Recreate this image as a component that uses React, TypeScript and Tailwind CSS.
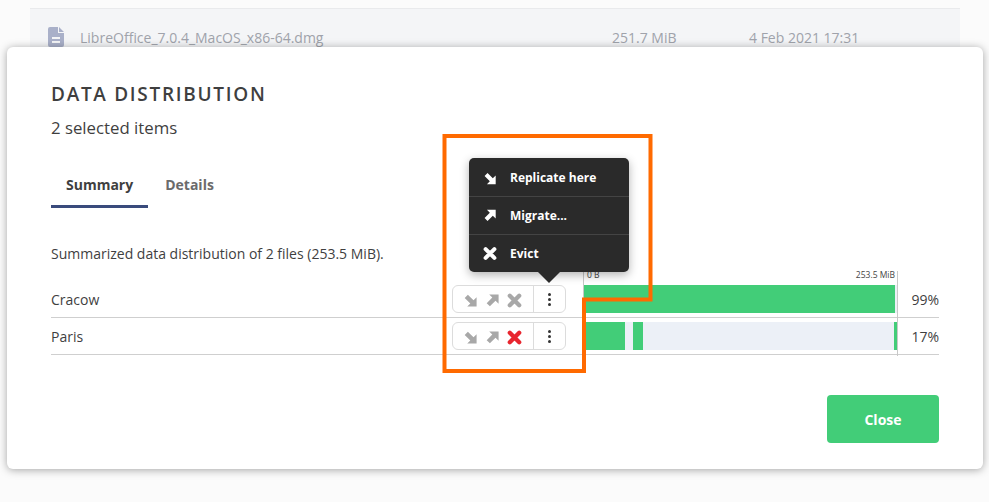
const ArrowIcon = ({ down, className }: { down?: boolean; className: string }) => (
  <svg viewBox="0 0 16 16" className={`h-[15px] w-[15px] ${down ? "rotate-90" : ""} ${className}`} fill="currentColor">
    <path d="M4.5 1.5 H14.5 V11.5 L11.2 8.2 L5.2 14.2 L1.8 10.8 L7.8 4.8 Z" />
  </svg>
);

const CrossIcon = ({ className }: { className: string }) => (
  <svg viewBox="0 0 16 16" className={`h-[15px] w-[15px] ${className}`} fill="none" stroke="currentColor" strokeWidth="4.6" strokeLinecap="round">
    <path d="M3 3 L13 13 M13 3 L3 13" />
  </svg>
);

const Dots = () => (
  <span className="flex flex-col gap-[2px]">
    <span className="h-[3px] w-[3px] rounded-full bg-[#333]" />
    <span className="h-[3px] w-[3px] rounded-full bg-[#333]" />
    <span className="h-[3px] w-[3px] rounded-full bg-[#333]" />
  </span>
);

const menuItems = [
  { label: "Replicate here", icon: <ArrowIcon down className="text-white" /> },
  { label: "Migrate...", icon: <ArrowIcon className="text-white" /> },
  { label: "Evict", icon: <CrossIcon className="text-white" /> },
];

function Actions({ evict, menu }: { evict?: boolean; menu?: boolean }) {
  return (
    <div className="relative flex h-[28px] w-[114px] shrink-0 rounded-[6px] border border-[#dcdcdc] bg-white">
      <div className="flex w-[81px] items-center justify-between border-r border-[#dcdcdc] pl-[10px] pr-[11px] pt-[2px]">
        <ArrowIcon down className="text-[#a8a8a8]" />
        <ArrowIcon className="text-[#a8a8a8]" />
        <CrossIcon className={evict ? "text-[#e8262f]" : "text-[#a8a8a8]"} />
      </div>
      <div className="flex flex-1 items-center justify-center pt-[1px]">
        <Dots />
      </div>
      {menu && (
        <div className="absolute bottom-[40px] left-[16px] z-10 w-[160px] rounded-[5px] bg-[#2a2a2a] shadow-[0_3px_10px_rgba(0,0,0,0.3)]">
          {menuItems.map((item, i) => (
            <div key={item.label} className={`flex h-[38px] items-center gap-[13px] pl-[14px] text-[12px] font-bold text-white ${i > 0 ? "border-t border-[#444]" : "pt-[2px]"}`}>
              <span className="flex w-[14px] justify-center">{item.icon}</span>
              {item.label}
            </div>
          ))}
          <div className="absolute left-[69px] top-full h-0 w-0 border-x-[11px] border-t-[11px] border-x-transparent border-t-[#2a2a2a]" />
        </div>
      )}
    </div>
  );
}

export default function App() {
  return (
    <div className="relative h-[502px] w-[989px] overflow-hidden bg-[#fbfbfb] font-['Open_Sans',sans-serif] text-[#3f3f3f]">
      <div className="ml-[30px] mr-[29px] mt-[8px] flex h-[60px] items-start border-t border-[#e9eaec] bg-[#f4f5f7] pl-[18px] pt-[18px] text-[14px] text-[#a0a3ab]">
        <svg viewBox="0 0 16 20" className="h-[20px] w-[16px] text-[#a9b0c9]" fill="currentColor">
          <path d="M2 0 H10 V6 H16 V18 A2 2 0 0 1 14 20 H2 A2 2 0 0 1 0 18 V2 A2 2 0 0 1 2 0 Z M11 0 L16 5 H11 Z M4 10 V12 H12 V10 Z M4 14 V16 H12 V14 Z" fillRule="evenodd" />
        </svg>
        <span className="ml-[16px] w-[532px]">LibreOffice_7.0.4_MacOS_x86-64.dmg</span>
        <span className="w-[137px]">251.7 MiB</span>
        <span>4 Feb 2021 17:31</span>
      </div>

      <div className="absolute left-[7px] top-[47px] h-[422px] w-[976px] rounded-[6px] bg-white px-[44px] pt-[35px] shadow-[0_1px_8px_rgba(0,0,0,0.35)]">
        <h1 className="text-[19px] font-semibold leading-[24px] tracking-[1.7px]">DATA DISTRIBUTION</h1>
        <p className="mt-[11px] text-[16.8px] leading-[22px]">2 selected items</p>

        <div className="mt-[36px] flex text-[14px] font-bold leading-[20px]">
          <div className="border-b-[3px] border-[#3a4b7c] px-[15px] pb-[10px]">Summary</div>
          <div className="ml-[2px] px-[15px] text-[#6b6b6b]">Details</div>
        </div>

        <p className="mt-[36px] text-[14px] leading-[20px]">Summarized data distribution of 2 files (253.5 MiB).</p>

        <div className="relative mt-[3px]">
          <div className="absolute bottom-[37px] left-[532px] top-[4px] w-px bg-[#c8c8c8]" />
          <div className="absolute bottom-[-1px] left-[846px] top-[4px] w-px bg-[#c8c8c8]" />

          <div className="ml-[536px] flex h-[14px] w-[308px] items-center justify-between pt-[3px] text-[8.5px] leading-none text-[#444]">
            <span>0 B</span>
            <span>253.5 MiB</span>
          </div>

          <div className="flex h-[37px] items-center border-b border-[#cfcfcf] text-[14px]">
            <span className="w-[401px]">Cracow</span>
            <Actions menu />
            <div className="ml-[18px] flex h-[28px] w-[313px] bg-[#ecf0f7]">
              <div className="w-[311px] bg-[#42cd78]" />
            </div>
            <span className="flex-1 text-right">99%</span>
          </div>

          <div className="flex h-[37px] items-center border-b border-[#cfcfcf] text-[14px]">
            <span className="w-[401px]">Paris</span>
            <Actions evict />
            <div className="ml-[18px] flex h-[28px] w-[313px] bg-[#ecf0f7]">
              <div className="w-[41px] bg-[#42cd78]" />
              <div className="ml-[8px] w-[10px] bg-[#42cd78]" />
              <div className="ml-auto w-[3px] bg-[#42cd78]" />
            </div>
            <span className="flex-1 text-right">17%</span>
          </div>
        </div>

        <div className="mt-[40px] flex justify-end">
          <button className="h-[48px] w-[112px] rounded-[4px] bg-[#42cd78] text-[14px] font-bold text-white">Close</button>
        </div>
      </div>

      {/* annotation drawn over the screenshot */}
      <svg className="absolute left-0 top-0 z-20" width="989" height="502" fill="none">
        <path d="M444.5 136 H650.5 V299.5 H584 V371 H444.5 Z" stroke="#ff6a00" strokeWidth="4" />
      </svg>
    </div>
  );
}
